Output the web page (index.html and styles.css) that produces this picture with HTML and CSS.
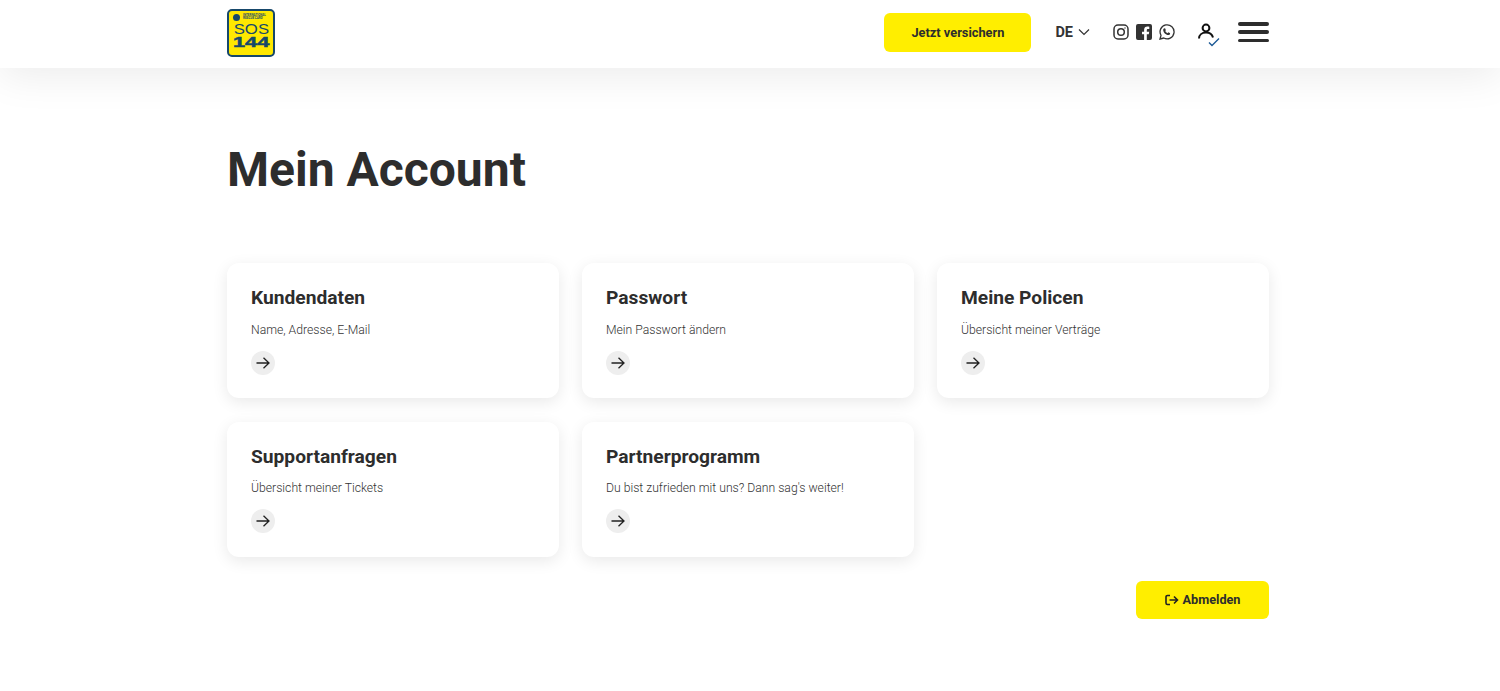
FILE: index.html
```html
<!DOCTYPE html>
<html lang="de">
<head>
<meta charset="utf-8">
<title>Mein Account</title>
<link rel="stylesheet" href="styles.css">
</head>
<body>
<header class="header">
  <div class="container header-row">
    <a class="logo" href="#">
      <span class="logo-top"><span class="logo-dot"></span><span class="logo-small">INTERNATIONAL<br>RESCUE CARD</span></span>
      <span class="logo-sos">SOS</span>
      <span class="logo-num">144</span>
    </a>
    <a class="btn btn-cta" href="#">Jetzt versichern</a>
    <div class="lang">DE
      <svg width="12" height="8" viewBox="0 0 12 8" fill="none" stroke="#333" stroke-width="1.2"><path d="M1 1.5l5 5 5-5"/></svg>
    </div>
    <div class="socials">
      <svg width="16" height="16" viewBox="0 0 16 16" fill="none" stroke="#333" stroke-width="1.5"><rect x="1" y="1" width="14" height="14" rx="4"/><circle cx="8" cy="8" r="3.3"/><circle cx="12" cy="4" r=".7" fill="#333" stroke="none"/></svg>
      <svg width="16" height="16" viewBox="0 0 16 16"><path fill="#333" d="M2 0h12a2 2 0 0 1 2 2v12a2 2 0 0 1-2 2h-3.2v-5.8h2l.4-2.5h-2.4V6.200c0-.8.3-1.300 1.400-1.300h1.100V2.700c-.5-.1-1.200-.2-1.900-.2-2 0-3.300 1.200-3.300 3.400v1.800H6v2.500h2.100V16H2a2 2 0 0 1-2-2V2a2 2 0 0 1 2-2z"/></svg>
      <svg width="16" height="16" viewBox="0 0 16 16" fill="none" stroke="#333" stroke-width="1.300"><path d="M1 15l1-3.700A7 7 0 1 1 4.800 14z"/><path fill="#333" stroke="none" d="M5.700 4.300c.3 0 .5 0 .6.400l.5 1.200c.1.200 0 .4-.1.500l-.5.600c.5 1 1.300 1.700 2.300 2.200l.6-.7c.1-.2.300-.2.500-.1l1.200.6c.3.100.3.300.3.500 0 1-.9 1.600-1.800 1.600-2.500-.2-5-2.600-5.100-5.100 0-.9.600-1.700 1.500-1.700z"/></svg>
    </div>
    <div class="user">
      <svg width="26" height="26" viewBox="0 0 26 26" fill="none"><circle cx="8" cy="6" r="3.400" stroke="#111" stroke-width="2"/><path d="M1 16.500c0-3.500 3-6 7-6s6.300 2.300 7 5" stroke="#111" stroke-width="2"/><path d="M11 20.500l3 3 7-7" stroke="#1d5a96" stroke-width="1.400"/></svg>
    </div>
    <button class="burger" type="button" aria-label="Menü"><span></span><span></span><span></span></button>
  </div>
</header>
<main class="container main">
  <h1 class="title">Mein Account</h1>
  <section class="grid">
    <a class="card" href="#"><h2>Kundendaten</h2><p>Name, Adresse, E-Mail</p><span class="arrow"><svg width="14" height="12" viewBox="0 0 14 12" fill="none" stroke="#222" stroke-width="1.300"><path d="M0.500 6h12.500M7.500 0.700L13 6l-5.500 5.300"/></svg></span></a>
    <a class="card" href="#"><h2>Passwort</h2><p>Mein Passwort ändern</p><span class="arrow"><svg width="14" height="12" viewBox="0 0 14 12" fill="none" stroke="#222" stroke-width="1.300"><path d="M0.500 6h12.500M7.500 0.700L13 6l-5.500 5.300"/></svg></span></a>
    <a class="card" href="#"><h2>Meine Policen</h2><p>Übersicht meiner Verträge</p><span class="arrow"><svg width="14" height="12" viewBox="0 0 14 12" fill="none" stroke="#222" stroke-width="1.300"><path d="M0.500 6h12.500M7.500 0.700L13 6l-5.500 5.300"/></svg></span></a>
    <a class="card" href="#"><h2>Supportanfragen</h2><p>Übersicht meiner Tickets</p><span class="arrow"><svg width="14" height="12" viewBox="0 0 14 12" fill="none" stroke="#222" stroke-width="1.300"><path d="M0.500 6h12.500M7.500 0.700L13 6l-5.500 5.300"/></svg></span></a>
    <a class="card" href="#"><h2>Partnerprogramm</h2><p>Du bist zufrieden mit uns? Dann sag's weiter!</p><span class="arrow"><svg width="14" height="12" viewBox="0 0 14 12" fill="none" stroke="#222" stroke-width="1.300"><path d="M0.500 6h12.500M7.500 0.700L13 6l-5.500 5.300"/></svg></span></a>
  </section>
  <div class="actions">
    <a class="btn btn-logout" href="#">
      <svg width="14" height="12" viewBox="0 0 14 12" fill="none" stroke="#222" stroke-width="1.600"><path d="M5 1.500H2.500a1.500 1.500 0 0 0-1.500 1.500v6a1.500 1.500 0 0 0 1.500 1.500H5M4.500 6h8M9 2.500L12.500 6 9 9.500"/></svg>
      Abmelden
    </a>
  </div>
</main>
<footer class="footer"></footer>
</body>
</html>
```
FILE: styles.css
```css
* { box-sizing: border-box; }
html, body { margin: 0; padding: 0; }
body {
  background: #fff;
  color: #2d2d2d;
  font-family: Roboto, "Liberation Sans", sans-serif;
  height: 691px;
  overflow: hidden;
}
a { color: inherit; text-decoration: none; }
.container { width: 1042px; margin: 0 auto; position: relative; left: -2px; }
.header {
  height: 68px;
  background: #fff;
  box-shadow: 0 8px 40px rgba(0, 0, 0, .08);
  position: relative;
}
.header-row { display: flex; align-items: center; height: 64px; }
.logo {
  width: 48px;
  height: 48px;
  margin-top: 1px;
  background: #ffe800;
  border: 2px solid #17486b;
  border-radius: 5px;
  display: flex;
  flex-direction: column;
  align-items: center;
  overflow: hidden;
  color: #17486b;
  line-height: 1;
}
.logo-top { display: flex; align-items: center; gap: 3px; margin-top: 3px; width: 36px; }
.logo-dot { width: 7px; height: 7px; border-radius: 50%; background: #17486b; flex: none; }
.logo-small { font-size: 3px; font-weight: 700; line-height: 3.500px; white-space: nowrap; }
.logo-sos { font-family: "Liberation Sans", sans-serif; font-size: 15.500px; line-height: 12px; margin-top: 2px; transform: scaleX(1.080); }
.logo-num { font-family: "Liberation Sans", sans-serif; font-size: 14.500px; font-weight: 700; line-height: 12px; margin-top: 1px; transform: scaleX(1.500); -webkit-text-stroke: .5px #17486b; }
.btn {
  background: #ffee00;
  border-radius: 6px;
  font-weight: 700;
  font-size: 12.800px;
  color: #2d2d2d;
  display: flex;
  align-items: center;
  justify-content: center;
}
.btn-cta { width: 147px; height: 39px; margin-left: auto; margin-top: 1px; }
.lang {
  display: flex;
  align-items: center;
  gap: 5px;
  margin-left: 24px;
  font-size: 14.500px;
  font-weight: 700;
  color: #333;
}
.socials { display: flex; align-items: center; gap: 7px; margin-left: 23px; }
.socials svg { display: block; }
.user { margin-left: 23px; height: 26px; margin-top: 6px; }
.user svg { display: block; }
.burger {
  width: 31px;
  height: 20px;
  margin-left: 14px;
  padding: 0;
  border: 0;
  background: none;
  display: flex;
  flex-direction: column;
  justify-content: space-between;
}
.burger span { display: block; height: 3.500px; background: #2d2d2d; border-radius: 2px; }
.main { height: 623px; }
.title {
  margin: 0;
  padding-top: 73px;
  font-size: 48px;
  line-height: 58px;
  font-weight: 700;
  color: #2d2d2d;
}
.grid {
  display: grid;
  grid-template-columns: repeat(3, 332px);
  column-gap: 23px;
  row-gap: 23.700px;
  margin-top: 64px;
}
.card {
  height: 135px;
  padding: 23.400px 24px 0;
  background: #fff;
  border-radius: 12px;
  box-shadow: 0 4px 16px rgba(0, 0, 0, .09);
  display: block;
}
.card h2 { margin: 0; font-size: 19.200px; line-height: 23px; font-weight: 700; color: #2d2d2d; }
.card p { margin: 13.200px 0 0; font-size: 12.200px; line-height: 14px; font-weight: 300; color: #333; }
.arrow {
  display: flex;
  width: 24px;
  height: 24px;
  margin-top: 14.100px;
  border-radius: 50%;
  background: #eee;
  align-items: center;
  justify-content: center;
}
.actions { display: flex; justify-content: flex-end; margin-top: 24.300px; }
.btn-logout { width: 133px; height: 38px; gap: 4px; font-size: 12.700px; }
.footer { height: 0; box-shadow: 0 0 30px rgba(0, 0, 0, .03); }
```
